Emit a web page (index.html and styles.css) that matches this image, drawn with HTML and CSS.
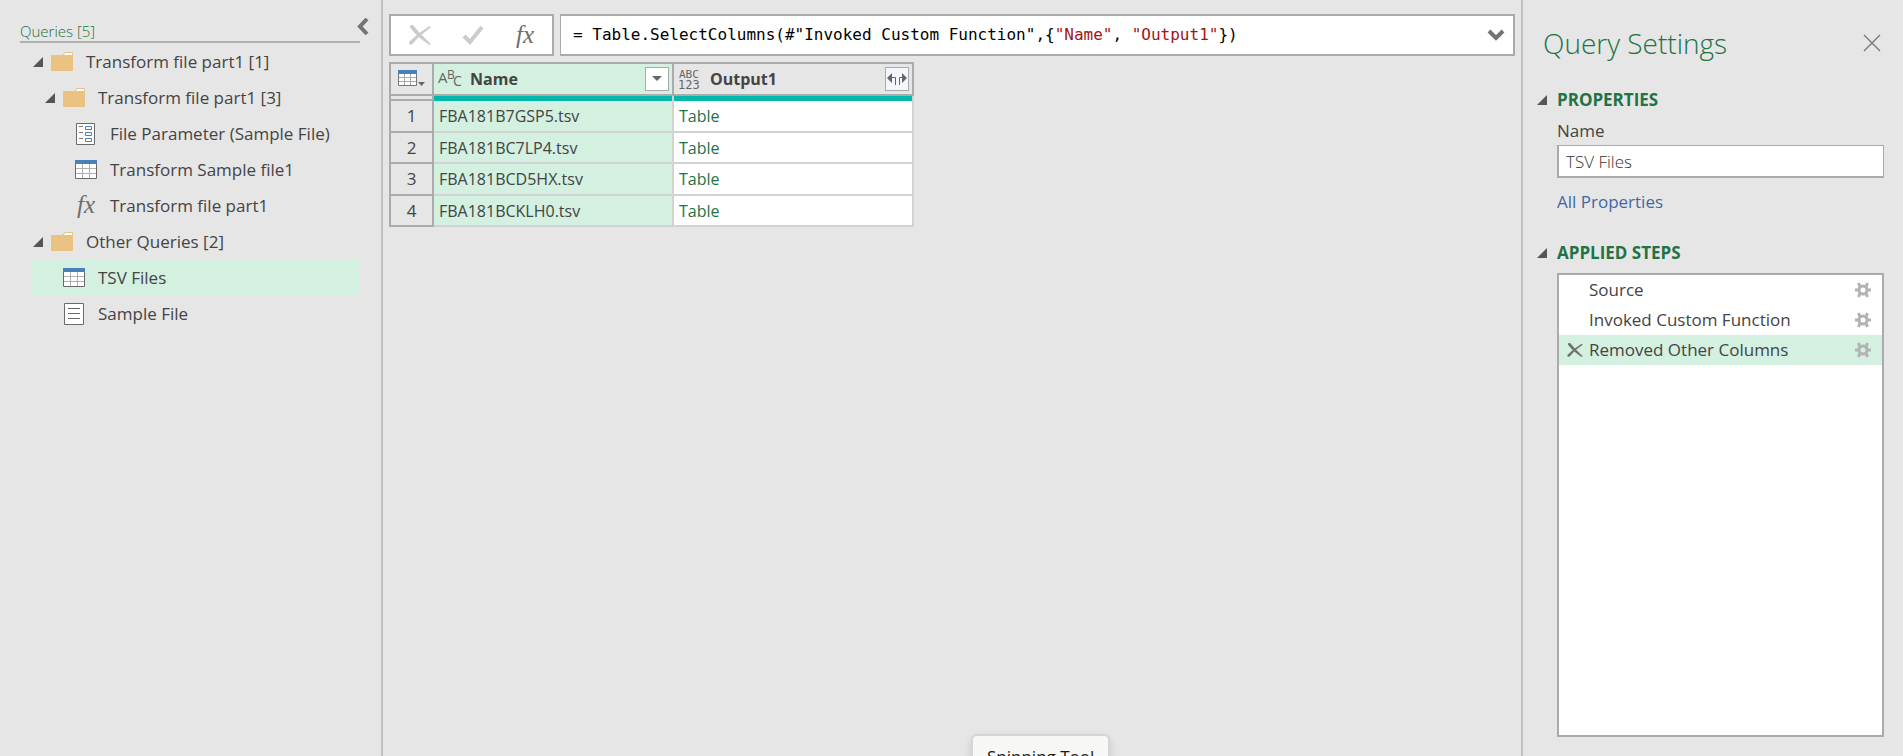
FILE: index.html
```html
<!DOCTYPE html>
<html lang="en">
<head>
<meta charset="utf-8">
<title>Power Query Editor</title>
<link rel="stylesheet" href="styles.css">
</head>
<body>
<svg class="defs" aria-hidden="true">
  <symbol id="tri" viewBox="0 0 10 10"><path d="M10 0V10H0Z" fill="#555"/></symbol>
  <symbol id="folder" viewBox="0 0 22 20"><path d="M0 4Q0 3 1 3H11L14 0H21L22 1V19H0Z" fill="#eac282"/><path d="M12.500 3L14.500 1H21V3Z" fill="#fff"/></symbol>
  <symbol id="table" viewBox="0 0 22 20"><path d="M.5 1H21.500V18.500H.5Z" fill="#fff" stroke="#6a6a6a"/><path d="M7.500 4V18M14.500 4V18M1 8.500H21M1 13.500H21" stroke="#b0b0b0" fill="none"/><path d="M0 0H22V4H0Z" fill="#4a80ba"/></symbol>
  <symbol id="param" viewBox="0 0 22 22"><path d="M1.500 .5H19.500V21.500H1.500Z" fill="#fff" stroke="#6a6a6a"/><path d="M4 3.500H8M4 9.500H8M4 15.500H8" stroke="#777"/><path d="M10.500 3.500H16.500V6.500H10.500ZM10.500 9.500H16.500V12.500H10.500ZM10.500 15.500H16.500V18.500H10.500Z" fill="#fff" stroke="#4a80ba"/></symbol>
  <symbol id="doc" viewBox="0 0 22 22"><path d="M1.500 .5H20.500V21.500H1.500Z" fill="#fff" stroke="#6a6a6a"/><path d="M5 5.500H17M5 10.500H17M5 15.500H17" stroke="#666"/></symbol>
  <symbol id="cross" viewBox="0 0 22 20"><path d="M1 1Q2 -1 4.500 .5Q11 9 22 19L20.500 20Q8 12 1 2.500Z"/><path d="M22 2.500L20.500 1Q9 8 0 17L.5 19.500L3 19.500Q11 9.500 22 2.500Z"/></symbol>
  <symbol id="gear" viewBox="0 0 16 16"><circle cx="8" cy="8" r="4" fill="none" stroke="#b3b3b3" stroke-width="3"/><path d="M0 8H3M13 8H16M5 5L3.500 1M11 5L12.500 1M5 11L3.500 15M11 11L12.500 15" stroke="#b3b3b3" stroke-width="3"/></symbol>
</svg>
<div class="app">
  <nav class="queries" aria-label="Queries">
    <header class="queries-head">
      <h2 class="queries-title">Queries [5]</h2>
      <button class="plain collapse" aria-label="Collapse"><svg width="12" height="18" viewBox="0 0 12 18"><path d="M10 1L3 8.500L10 16" fill="none" stroke="#737373" stroke-width="4"/></svg></button>
    </header>
    <ul class="tree">
      <li class="node"><svg class="tri"><use href="#tri"/></svg><svg class="icon folder"><use href="#folder"/></svg>Transform file part1 [1]</li>
      <li class="node level2"><svg class="tri"><use href="#tri"/></svg><svg class="icon folder"><use href="#folder"/></svg>Transform file part1 [3]</li>
      <li class="node level3"><span class="tri"></span><svg class="icon sheet"><use href="#param"/></svg>File Parameter (Sample File)</li>
      <li class="node level3"><span class="tri"></span><svg class="icon"><use href="#table"/></svg>Transform Sample file1</li>
      <li class="node level3"><span class="tri"></span><span class="icon fx">fx</span>Transform file part1</li>
      <li class="node"><svg class="tri"><use href="#tri"/></svg><svg class="icon folder"><use href="#folder"/></svg>Other Queries [2]</li>
      <li class="node level2 selected"><span class="tri"></span><svg class="icon"><use href="#table"/></svg>TSV Files</li>
      <li class="node level2"><span class="tri"></span><svg class="icon sheet"><use href="#doc"/></svg>Sample File</li>
    </ul>
  </nav>

  <main class="editor">
    <div class="formula-row">
      <div class="formula-tools">
        <button class="plain" aria-label="Cancel"><svg width="22" height="20" fill="#cbcbcb"><use href="#cross"/></svg></button>
        <button class="plain" aria-label="Accept"><svg width="22" height="20" viewBox="0 0 22 20"><path d="M2 11L8 17L20 2" fill="none" stroke="#cbcbcb" stroke-width="4"/></svg></button>
        <button class="plain fx" aria-label="Insert step">fx</button>
      </div>
      <div class="formula">
        <code class="code">= Table.SelectColumns(#"Invoked Custom Function",{<span class="str">"Name"</span>, <span class="str">"Output1"</span>})</code>
        <button class="plain" aria-label="Expand formula bar"><svg width="18" height="12" viewBox="0 0 18 12"><path d="M2 2L9 9L16 2" fill="none" stroke="#737373" stroke-width="4"/></svg></button>
      </div>
    </div>
    <table class="grid">
      <thead>
        <tr>
          <th class="corner"><button class="plain" aria-label="Table options"><svg width="28" height="18" viewBox="0 0 28 18"><path d="M.5 1H18.500V15.500H.5Z" fill="#fff" stroke="#777"/><path d="M6.500 4V15M12.500 4V15M1 7.500H18M1 11.500H18" stroke="#aaa"/><path d="M0 0H19V4H0Z" fill="#4a80ba"/><path d="M20 12H27L23.500 16Z" fill="#666"/></svg></button></th>
          <th class="picked"><div class="head"><svg class="type" width="24" height="24" viewBox="0 0 24 24"><text x="0" y="16" font-size="15">A</text><text x="9" y="12" font-size="12">B</text><text x="15" y="19" font-size="14">C</text></svg><span class="label">Name</span><button class="drop" aria-label="Filter Name"><svg width="10" height="6"><path d="M0 0H10L5 5Z" fill="#666"/></svg></button></div></th>
          <th><div class="head"><svg class="type" width="24" height="24" viewBox="0 0 24 24"><text class="mono" x="1" y="11" font-size="11">ABC</text><text class="mono" x="0" y="22" font-size="12">123</text></svg><span class="label">Output1</span><button class="drop expand" aria-label="Expand Output1"><svg width="20" height="12" viewBox="0 0 20 12"><path d="M0 5L5 0V10ZM20 5L15 0V10Z" fill="#666"/><path d="M4 4.500H8.500V12M16 4.500H12.500V12" fill="none" stroke="#666"/></svg></button></div></th>
        </tr>
        <tr class="quality"><th></th><td></td><td></td></tr>
      </thead>
      <tbody>
        <tr><th>1</th><td class="picked">FBA181B7GSP5.tsv</td><td class="link">Table</td></tr>
        <tr><th>2</th><td class="picked">FBA181BC7LP4.tsv</td><td class="link">Table</td></tr>
        <tr><th>3</th><td class="picked">FBA181BCD5HX.tsv</td><td class="link">Table</td></tr>
        <tr><th>4</th><td class="picked">FBA181BCKLH0.tsv</td><td class="link">Table</td></tr>
      </tbody>
    </table>
  </main>

  <aside class="settings">
    <header class="settings-head">
      <h1 class="settings-title">Query Settings</h1>
      <button class="plain" aria-label="Close"><svg width="18" height="18" viewBox="0 0 18 18"><path d="M1 1L17 17M17 1L1 17" stroke="#777" stroke-width="1.300"/></svg></button>
    </header>
    <h3 class="section"><svg class="tri"><use href="#tri"/></svg>PROPERTIES</h3>
    <div class="props">
      <label for="qname">Name</label>
      <input id="qname" class="name-input" type="text" value="TSV Files">
      <a class="all-props" href="#">All Properties</a>
    </div>
    <h3 class="section"><svg class="tri"><use href="#tri"/></svg>APPLIED STEPS</h3>
    <ol class="steps">
      <li class="step"><span class="mark"></span><span class="step-name">Source</span><button class="plain" aria-label="Edit Source"><svg width="16" height="16"><use href="#gear"/></svg></button></li>
      <li class="step"><span class="mark"></span><span class="step-name">Invoked Custom Function</span><button class="plain" aria-label="Edit Invoked Custom Function"><svg width="16" height="16"><use href="#gear"/></svg></button></li>
      <li class="step selected"><button class="plain mark" aria-label="Delete step"><svg width="16" height="14" fill="#737373"><use href="#cross"/></svg></button><span class="step-name">Removed Other Columns</span><button class="plain" aria-label="Edit Removed Other Columns"><svg width="16" height="16"><use href="#gear"/></svg></button></li>
    </ol>
  </aside>
</div>
<div class="tooltip" role="tooltip">Snipping Tool</div>
</body>
</html>
```
FILE: styles.css
```css
* { box-sizing: border-box; }
body {
  margin: 0;
  background: #e6e6e6;
  color: #444;
  font: 17px/24px "Open Sans", "Noto Sans", sans-serif;
  overflow: hidden;
}
h1, h2, h3, ul, ol { margin: 0; padding: 0; font-weight: 400; }
ul, ol { list-style: none; }
svg { display: block; flex: none; }
.defs { position: absolute; width: 0; height: 0; }
.plain {
  display: flex;
  align-items: center;
  justify-content: center;
  padding: 0;
  border: 0;
  background: none;
}
.fx {
  font: italic 25px/22px "Liberation Serif", serif;
  color: #6e6e6e;
}
.tri { flex: none; width: 10px; height: 10px; }

.app {
  display: grid;
  grid-template-columns: 383px minmax(0, 1fr) 382px;
  min-height: 100vh;
}

/* Queries pane */
.queries { border-right: 2px solid #bfbfbf; padding: 19px 12px 0 20px; }
.queries-head { position: relative; display: flex; height: 24px; margin-right: 9px; }
.queries-title {
  flex: 1;
  color: #217346;
  font-size: 15px;
  font-weight: 300;
  line-height: 24px;
  border-bottom: 2px solid #b0b0b0;
}
.collapse { position: absolute; right: -9px; top: -1px; }
.tree { margin: 0 10px 0 11px; }
.node {
  display: flex;
  align-items: center;
  height: 36px;
  padding: 1px 0 0 2px;
  white-space: nowrap;
}
.level2 { padding-left: 14px; }
.level3 { padding-left: 26px; }
.icon { width: 22px; height: 20px; margin: 0 13px 0 8px; }
.icon.sheet { height: 22px; }
.icon.fx { height: 24px; text-align: center; flex: none; }
.selected { background: #d3f0e0; }

/* Editor */
.editor { padding: 14px 6px 0; }
.formula-row { display: flex; gap: 6px; height: 42px; }
.formula-tools {
  display: flex;
  align-items: center;
  justify-content: space-between;
  width: 165px;
  padding: 0 18px;
  border: 2px solid #ababab;
  background: #fff;
}
.formula {
  flex: 1;
  display: flex;
  align-items: center;
  justify-content: space-between;
  padding: 0 8px 0 12px;
  border: 2px solid #ababab;
  border-left-width: 1px;
  background: #fff;
}
.code { font: 16px/24px "DejaVu Sans Mono", monospace; color: #000; white-space: pre; }
.str { color: #a31515; }

.grid {
  width: 525px;
  margin-top: 6px;
  table-layout: fixed;
  border-spacing: 0;
  border: solid #ababab;
  border-width: 2px 0 0 2px;
  font-size: 16px;
  line-height: 24px;
}
.grid th, .grid td { padding: 0; text-align: left; }
.grid th { border: solid #ababab; border-width: 0 2px 2px 0; background: #e6e6e6; }
.grid td { border: solid #d2d2d2; border-width: 0 2px 2px 0; background: #fff; padding-left: 5px; }
.grid thead tr:first-child { height: 32px; }
.grid .corner { width: 43px; }
.corner .plain { margin-left: 7px; }
.grid .picked { background: #d3f0e0; }
.head { display: flex; align-items: center; padding: 0 3px 0 4px; }
.label { flex: 1; margin-left: 8px; }
.type { fill: #666; font-family: "Open Sans", sans-serif; font-weight: 500; overflow: visible; }
.mono { font-family: "DejaVu Sans Mono", monospace; }
.drop {
  display: flex;
  align-items: center;
  justify-content: center;
  width: 24px;
  height: 24px;
  padding: 0;
  border: 1px solid #ababab;
  background: #fff;
}
.expand { background: #f3f6fa; }
.grid .quality th { height: 5px; }
.grid .quality td { height: 5px; background: #01b8aa; border-bottom: 0; }
.grid tbody tr { height: 32px; }
.grid tbody tr:nth-child(even) { height: 31px; }
.grid tbody th { font-size: 17px; font-weight: 400; text-align: center; }
.grid .link { color: #217346; }

/* Query settings pane */
.settings {
  display: flex;
  flex-direction: column;
  height: 100vh;
  padding: 20px 19px 19px 14px;
  border-left: 2px solid #bfbfbf;
}
.settings-head {
  display: flex;
  align-items: center;
  justify-content: space-between;
  height: 46px;
  padding: 0 3px 0 6px;
}
.settings-title { color: #217346; font-size: 28px; font-weight: 300; line-height: 44px; }
.section {
  display: flex;
  align-items: center;
  gap: 10px;
  margin-top: 22px;
  color: #217346;
  font-size: 17px;
  font-weight: 700;
}
.props { display: flex; flex-direction: column; padding: 7px 0 5px 20px; }
.name-input {
  height: 33px;
  margin-top: 2px;
  padding: 0 7px;
  border: 2px solid #ababab;
  border-width: 1px 1px 2px 2px;
  background: #fff;
  color: #333;
  font: 300 17px/24px "Open Sans", sans-serif;
}
.all-props { align-self: flex-start; margin-top: 12px; color: #4169a0; text-decoration: none; }
.steps { flex: 1; margin: 8px 0 0 20px; border: 2px solid #ababab; background: #fff; }
.step { display: flex; align-items: center; height: 30px; padding-right: 11px; }
.mark { width: 30px; padding-left: 2px; flex: none; }
.step-name { flex: 1; }

.tooltip {
  position: absolute;
  left: 971px;
  top: 734px;
  padding: 9px 14px;
  border: 2px solid #d5d5d5;
  border-radius: 6px;
  background: #f7f7f6;
  color: #1a1a1a;
  box-shadow: 0 4px 8px #0002;
  font-size: 17px;
}
```
